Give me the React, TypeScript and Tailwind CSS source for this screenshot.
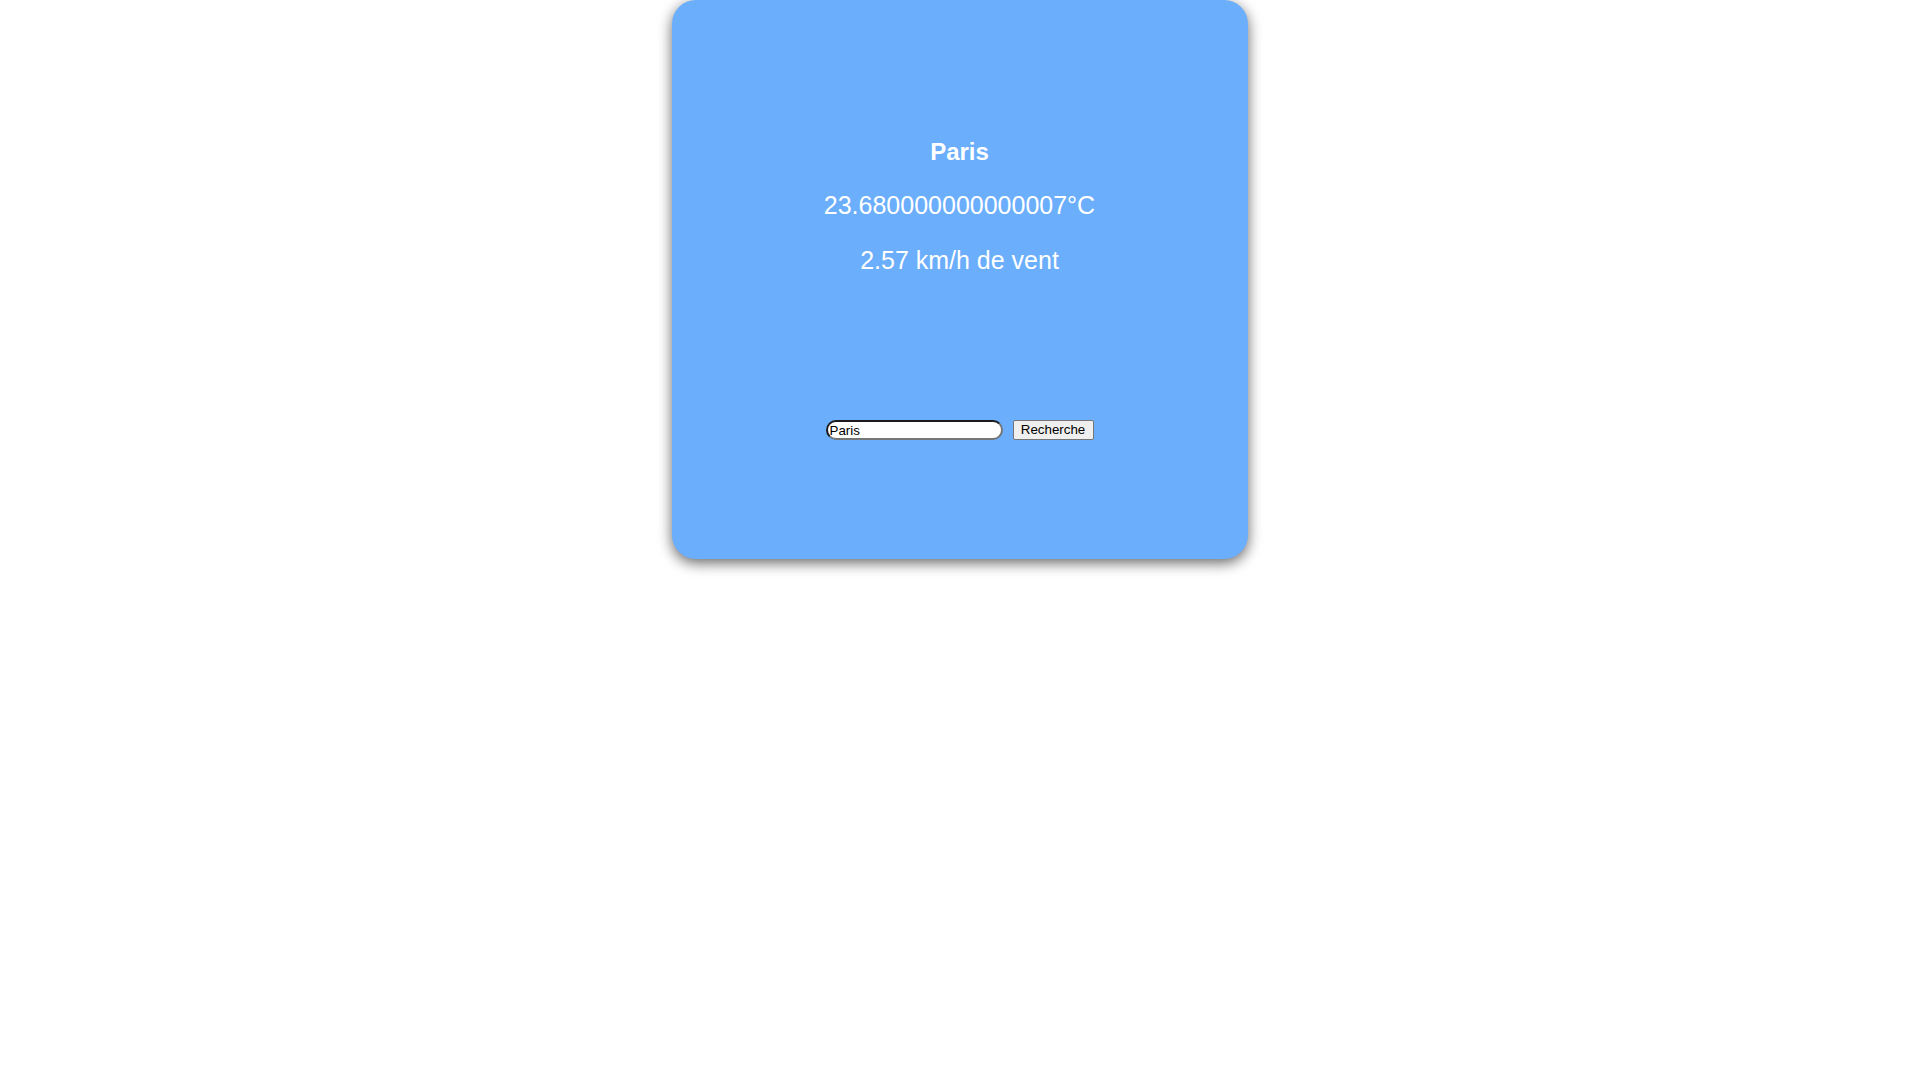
import React, { useState } from "react";

export default function App() {
  const [city, setCity] = useState("Paris");

  return (
    <div className="min-h-screen bg-white font-['Liberation_Sans',Arial,sans-serif]">
      <div className="mx-auto flex h-[559px] w-[576px] flex-col items-center rounded-[24px] bg-[#6aaefc] pt-[138px] text-white shadow-[0_4px_14px_rgba(0,0,0,0.6)]">
        <h1 className="m-0 text-[24px] font-bold leading-[28px]">Paris</h1>
        <p className="mt-[25px] text-[25px] leading-[29px]">23.680000000000007°C</p>
        <p className="mt-[26px] text-[25px] leading-[29px]">2.57 km/h de vent</p>

        <form className="mt-[145px] flex items-center gap-[10px]" onSubmit={(e) => e.preventDefault()}>
          <input
            value={city}
            onChange={(e) => setCity(e.target.value)}
            className="h-[20px] w-[177px] rounded-full border-2 border-solid border-b-[#767676] border-l-[#1a1a1a] border-r-[#767676] border-t-[#1a1a1a] bg-white px-[2px] text-[13.33px] leading-[16px] text-black outline-none"
          />
          <button
            type="submit"
            className="h-[20px] w-[81px] rounded-[2px] border border-solid border-[#767676] bg-[#efefef] text-[13.33px] leading-[16px] text-black"
          >
            Recherche
          </button>
        </form>
      </div>
    </div>
  );
}
